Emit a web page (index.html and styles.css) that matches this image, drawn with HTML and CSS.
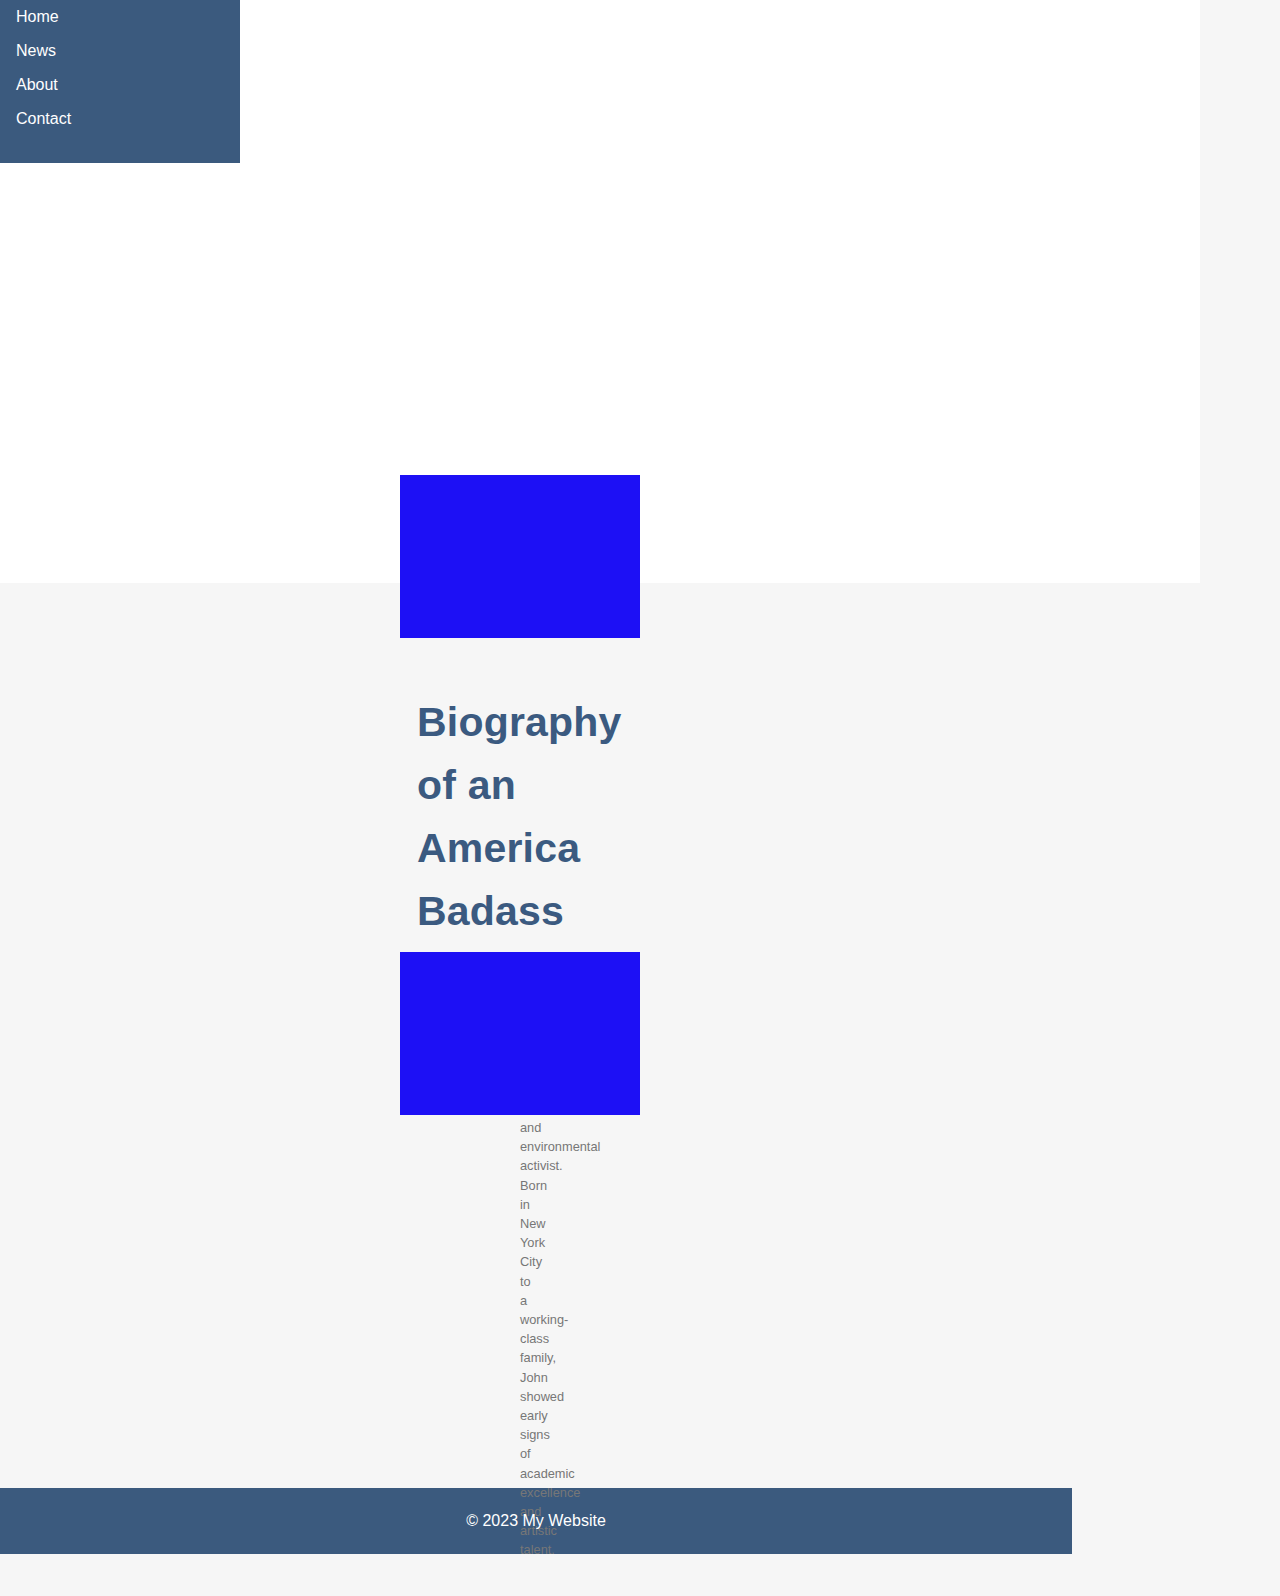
FILE: index.html
```html
<!DOCTYPE html>
<html lang="en">
<head>
<meta charset="utf-8">
<title>Biography of an America Badass</title>
<link rel="stylesheet" href="styles.css">
</head>
<body>
<header class="hero">
  <nav class="sidebar">
    <ul class="nav-list">
      <li><a class="nav-link" href="#">Home</a></li>
      <li><a class="nav-link" href="#">News</a></li>
      <li><a class="nav-link" href="#">About</a></li>
      <li><a class="nav-link" href="#">Contact</a></li>
    </ul>
  </nav>
  <div class="hero-media"></div>
</header>
<main class="main">
  <h1 class="title">Biography of an America Badass</h1>
  <div class="media"></div>
  <p class="bio">and environmental activist. Born in New York City to a working-class family, John showed early signs of academic excellence and artistic talent.</p>
</main>
<footer class="footer">© 2023 My Website</footer>
</body>
</html>
```

FILE: styles.css
```css
html, body {
  margin: 0;
  padding: 0;
}

body {
  background: #f6f6f6;
  font-family: "Liberation Sans", Arial, sans-serif;
}

.hero {
  width: 1200px;
  height: 583px;
  background: #ffffff;
  display: flex;
  flex-direction: column;
  align-items: flex-start;
}

.sidebar {
  width: 240px;
  background: #3b5a7e;
  padding-bottom: 27px;
}

.nav-list {
  list-style: none;
  margin: 0;
  padding: 0;
}

.nav-link {
  display: block;
  padding: 8px 16px;
  line-height: 18px;
  font-size: 16px;
  color: #ffffff;
  text-decoration: none;
}

.hero-media {
  flex: none;
  width: 240px;
  height: 163px;
  margin: 312px 0 0 400px;
  background: #1d10f5;
}

.main {
  box-sizing: border-box;
  width: 240px;
  height: 905px;
  margin-left: 400px;
  padding-top: 108px;
}

.title {
  margin: 0;
  padding-left: 17px;
  font-size: 41px;
  line-height: 63px;
  font-weight: bold;
  letter-spacing: 0.2px;
  color: #3b5a80;
}

.media {
  width: 240px;
  height: 163px;
  margin-top: 9px;
  background: #1d10f5;
}

.bio {
  width: 1px;
  margin: 3px 0 0 120px;
  font-size: 12.8px;
  line-height: 19.2px;
  color: #777777;
}

.footer {
  width: 1072px;
  padding: 24px 0;
  line-height: 18px;
  font-size: 16px;
  text-align: center;
  color: #ffffff;
  background: #3b5a7e;
}
```
